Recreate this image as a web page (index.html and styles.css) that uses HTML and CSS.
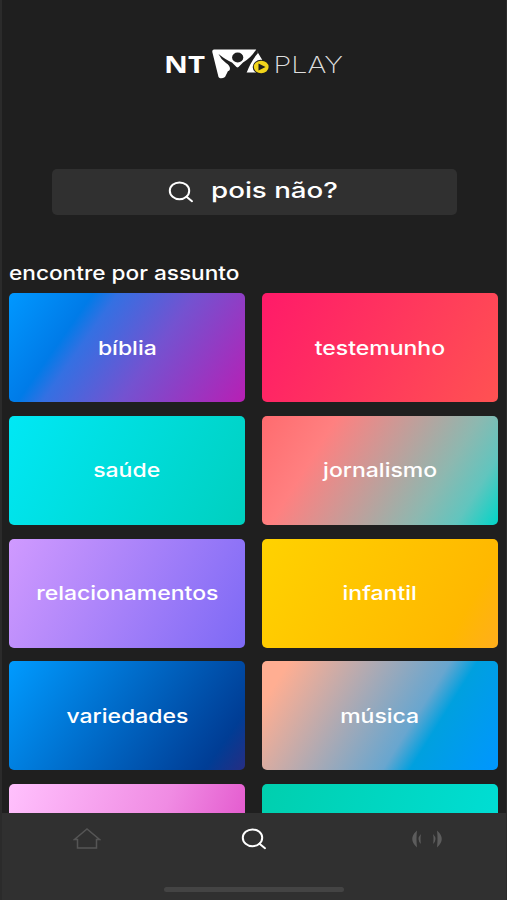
FILE: index.html
```html
<!DOCTYPE html>
<html lang="pt-BR">
<head>
    <meta charset="UTF-8">
    <meta name="viewport" content="width=device-width, initial-scale=1.0">
    <title>NT Play</title>
    <link rel="stylesheet" href="styles.css">
</head>
<body>
    <div class="app">
        <header class="header">
            <svg class="logo" viewBox="0 0 190 40" width="190" height="40">
                <text class="logo-nt" x="4" y="27.500" textLength="41" lengthAdjust="spacingAndGlyphs">NT</text>
                <path fill="#fff" d="M54 4.500 H96 L103.500 17 L96 27.500 L84 27.500 L77.500 24 L68 26 L65 32 Q62 34 59.500 33 L58.500 32 L52.300 7 Q52 4.500 54 4.500 Z"/>
                <path fill="#1f1f1f" d="M58.500 9 Q66 15 72 17.500 L76.500 22 Q77.500 22.800 78.500 22 L83 17.500 Q91 13 96.500 4 L98 8 Q91 16 86.500 28 L80 34 L65.500 34 L70 24 Q70 20.500 66 18 Q61 14.500 58.500 9 Z"/>
                <ellipse cx="77.700" cy="12.500" rx="5.600" ry="5" fill="#1f1f1f"/>
                <ellipse cx="101" cy="22" rx="8.300" ry="7.200" fill="#1f1f1f"/>
                <ellipse cx="101.200" cy="22" rx="7.400" ry="6.200" fill="#f2d51b"/>
                <path fill="#1f1f1f" d="M98.500 18.500 L105.500 22 L98.500 25.500 Z"/>
                <text class="logo-play" x="113.500" y="27.500" textLength="69.500" lengthAdjust="spacingAndGlyphs">PLAY</text>
            </svg>
        </header>

        <div class="search">
            <svg class="search-icon" viewBox="0 0 26 22" width="26" height="22">
                <ellipse cx="11.500" cy="9.800" rx="9.700" ry="8.400"/>
                <path d="M18.500 15.700 L24 20.200"/>
            </svg>
            <span class="search-text">pois não?</span>
        </div>

        <h2 class="title"><span>encontre por assunto</span></h2>

        <main class="grid">
            <div class="card biblia"><span>bíblia</span></div>
            <div class="card testemunho"><span>testemunho</span></div>
            <div class="card saude"><span>saúde</span></div>
            <div class="card jornalismo"><span>jornalismo</span></div>
            <div class="card relacionamentos"><span>relacionamentos</span></div>
            <div class="card infantil"><span>infantil</span></div>
            <div class="card variedades"><span>variedades</span></div>
            <div class="card musica"><span>música</span></div>
            <div class="card rosa"></div>
            <div class="card verde"></div>
        </main>

        <nav class="nav">
            <div class="nav-items">
                <svg class="nav-home" viewBox="0 0 28 24" width="28" height="24">
                    <path d="M4.500 12.500 L1.500 12.500 L14 2 L26.500 12.500 L23.500 12.500 L23.500 21 L4.500 21 Z"/>
                </svg>
                <svg class="nav-search" viewBox="0 0 26 22" width="26" height="22">
                    <ellipse cx="11.500" cy="9.800" rx="9.700" ry="8.400"/>
                    <path d="M18.500 15.700 L24 20.200"/>
                </svg>
                <svg class="nav-live" viewBox="0 0 30 18" width="30" height="18">
                    <path d="M5 0.500 Q-4.500 9 5 17.500 Q4 9 5 0.500 Z M9 4 Q4 9 9 14 Q8 9 9 4 Z"/>
                    <path d="M25 0.500 Q34.500 9 25 17.500 Q26 9 25 0.500 Z M21 4 Q26 9 21 14 Q22 9 21 4 Z"/>
                </svg>
            </div>
            <div class="home-bar"></div>
        </nav>
    </div>
</body>
</html>
```
FILE: styles.css
```css
* {
    box-sizing: border-box;
}
body {
    margin: 0;
    background: #1f1f1f;
    color: #fff;
    font-family: Inter, "Open Sans", sans-serif;
}
.app {
    display: flex;
    flex-direction: column;
    height: 900px;
    overflow: hidden;
    border-left: 2px solid #2b2b2b;
    border-right: 1px solid #2b2b2b;
}
.header {
    flex: none;
    height: 169px;
    padding: 45px 0 0 158px;
}
.logo {
    display: block;
}
.logo-nt {
    font-family: "Open Sans", sans-serif;
    font-size: 24px;
    font-weight: 700;
    fill: #fff;
}
.logo-play {
    font-family: Inter, sans-serif;
    font-size: 23px;
    font-weight: 200;
    fill: #ddd;
}
.search {
    display: flex;
    flex: none;
    align-items: center;
    width: 405px;
    height: 46px;
    margin-left: 50px;
    padding-left: 116px;
    background: #303030;
    border-radius: 5px;
}
.search-icon {
    fill: none;
    stroke: #fff;
    stroke-width: 2;
    stroke-linecap: round;
}
.search-text {
    margin: -5px 0 0 17px;
    font-size: 22px;
    font-weight: 500;
    transform: scaleX(1.26);
    transform-origin: left;
}
.title {
    flex: none;
    height: 78px;
    margin: 0;
    padding: 46px 0 0 7px;
    font-size: 19px;
    font-weight: 500;
    line-height: 25px;
}
.title span {
    display: inline-block;
    transform: scaleX(1.19);
    transform-origin: left;
}
.grid {
    display: grid;
    flex: none;
    grid-template-columns: 236px 236px;
    grid-auto-rows: 109px;
    gap: 13.8px 17px;
    height: 520px;
    padding-left: 7px;
    overflow: hidden;
}
.card {
    display: flex;
    justify-content: center;
    align-items: center;
    padding-top: 1px;
    border-radius: 5px;
    font-size: 19px;
    font-weight: 500;
}
.card span {
    transform: scaleX(1.21);
}
.biblia {
    background: linear-gradient(125deg, #0098ff 0%, #007be8 27%, #3470e2 35%, #7452d0 60%, #b81fb4 100%);
}
.testemunho {
    background: linear-gradient(120deg, #ff1a69, #ff5252);
}
.saude {
    background: linear-gradient(120deg, #00e8f5, #00d0bf);
}
.jornalismo {
    background: linear-gradient(122deg, #ff6b6f 0%, #ff8080 25%, #8db8b0 72%, #61c5be 86%, #00d5c8 100%);
}
.relacionamentos {
    background: linear-gradient(118deg, #d09aff 0%, #b98cfb 28%, #7d69f5 100%);
}
.infantil {
    background: linear-gradient(120deg, #ffd200 0%, #ffb800 82%, #ffae1c 100%);
}
.variedades {
    background: linear-gradient(125deg, #009bff 0%, #003d95 87%, #262d83 100%);
}
.musica {
    background: linear-gradient(122deg, #ffae92 0%, #ffae92 9%, #68a6cf 62%, #00a0df 71%, #0096ff 100%);
}
.rosa {
    background: linear-gradient(110deg, #ffc1fd, #f08be3 60%, #e04cc8);
}
.verde {
    background: linear-gradient(110deg, #00cfae, #00dfd8);
}
.nav {
    flex: none;
    height: 87px;
    background: #303030;
}
.nav-items {
    display: grid;
    grid-template-columns: 170px 164px 182px;
    align-items: center;
    justify-items: center;
    height: 52px;
}
.nav-home {
    fill: none;
    stroke: #555;
    stroke-width: 1.500;
}
.nav-search {
    fill: none;
    stroke: #fff;
    stroke-width: 2;
    stroke-linecap: round;
}
.nav-live {
    fill: #5c5c5c;
}
.home-bar {
    width: 180px;
    height: 5px;
    margin: 22px 0 0 162px;
    background: #444;
    border-radius: 3px;
}
```
